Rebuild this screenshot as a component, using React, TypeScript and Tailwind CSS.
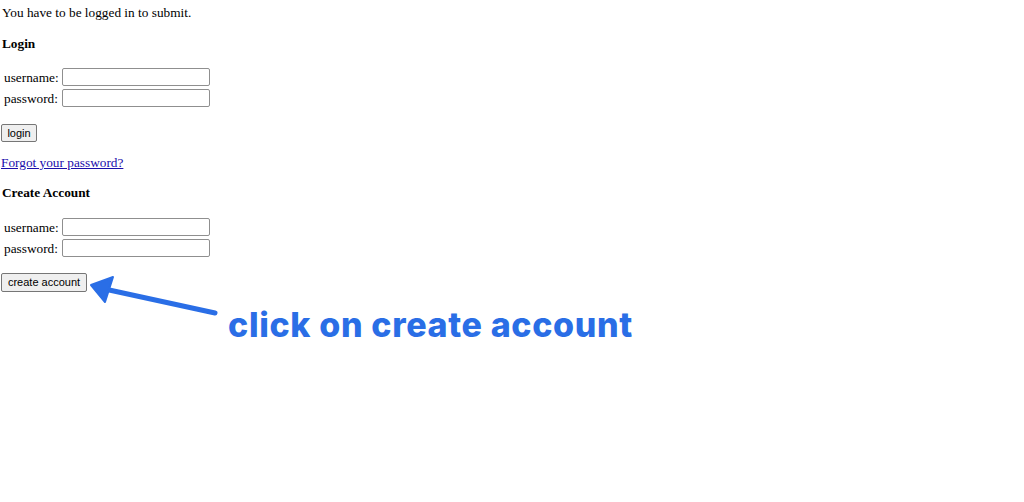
import React from "react";

const serif = { fontFamily: '"Liberation Serif", "Times New Roman", serif' };

function Field({ label }: { label: string }) {
    return (
        <div className="flex h-[18px] items-center">
            <span className="w-[60px] pl-[2px] text-[13.3px] leading-[15px] text-black">{label}</span>
            <input
                type={label === "password:" ? "password" : "text"}
                className="h-[18px] w-[148px] rounded-[2px] border border-[#8f8f8f] bg-white px-1 text-[13px] outline-none"
            />
        </div>
    );
}

function Button({ children, w }: { children: React.ReactNode; w: string }) {
    return (
        <button
            type="button"
            className={`flex h-[18px] items-center justify-center rounded-[2px] border border-[#767676] bg-[#efefef] text-[11px] leading-none text-black ${w}`}
            style={{ fontFamily: '"Liberation Sans", Arial, sans-serif' }}
        >
            {children}
        </button>
    );
}

export default function App() {
    return (
        <div className="relative h-[502px] w-[1024px] overflow-hidden bg-white" style={serif}>
            <div className="flex flex-col pt-[5px] pl-[2px] text-[13.3px] leading-[15px] text-black">
                <div className="h-[15px]">You have to be logged in to submit.</div>
                <div className="mt-[16px] h-[15px] font-bold">Login</div>
                <div className="mt-[17px] flex flex-col gap-[3px]">
                    <Field label="username:" />
                    <Field label="password:" />
                </div>
                <div className="mt-[17px] -ml-[1px]">
                    <Button w="w-[36px]">login</Button>
                </div>
                <a href="#" className="mt-[13px] h-[15px] w-fit -ml-[1px] text-[#1a0dab] underline">
                    Forgot your password?
                </a>
                <div className="mt-[15px] h-[15px] font-bold">Create Account</div>
                <div className="mt-[18px] flex flex-col gap-[3px]">
                    <Field label="username:" />
                    <Field label="password:" />
                </div>
                <div className="mt-[16px] -ml-[1px]">
                    <Button w="w-[86px] h-[19px]">create account</Button>
                </div>
            </div>

            {/* annotation */}
            <svg className="absolute left-0 top-0" width="1024" height="502" viewBox="0 0 1024 502">
                <line x1="215" y1="313" x2="100" y2="288" stroke="#2a6ee6" strokeWidth="5" strokeLinecap="round" />
                <polygon points="91,285 113,277 105,302" fill="#2a6ee6" stroke="#2a6ee6" strokeWidth="2" strokeLinejoin="round" />
            </svg>
            <div
                className="absolute left-[228px] top-[305px] text-[34px] font-extrabold leading-[40px] tracking-[0.65px] text-[#2a6ee6]"
                style={{ fontFamily: "Inter, sans-serif" }}
            >
                click on create account
            </div>
        </div>
    );
}
